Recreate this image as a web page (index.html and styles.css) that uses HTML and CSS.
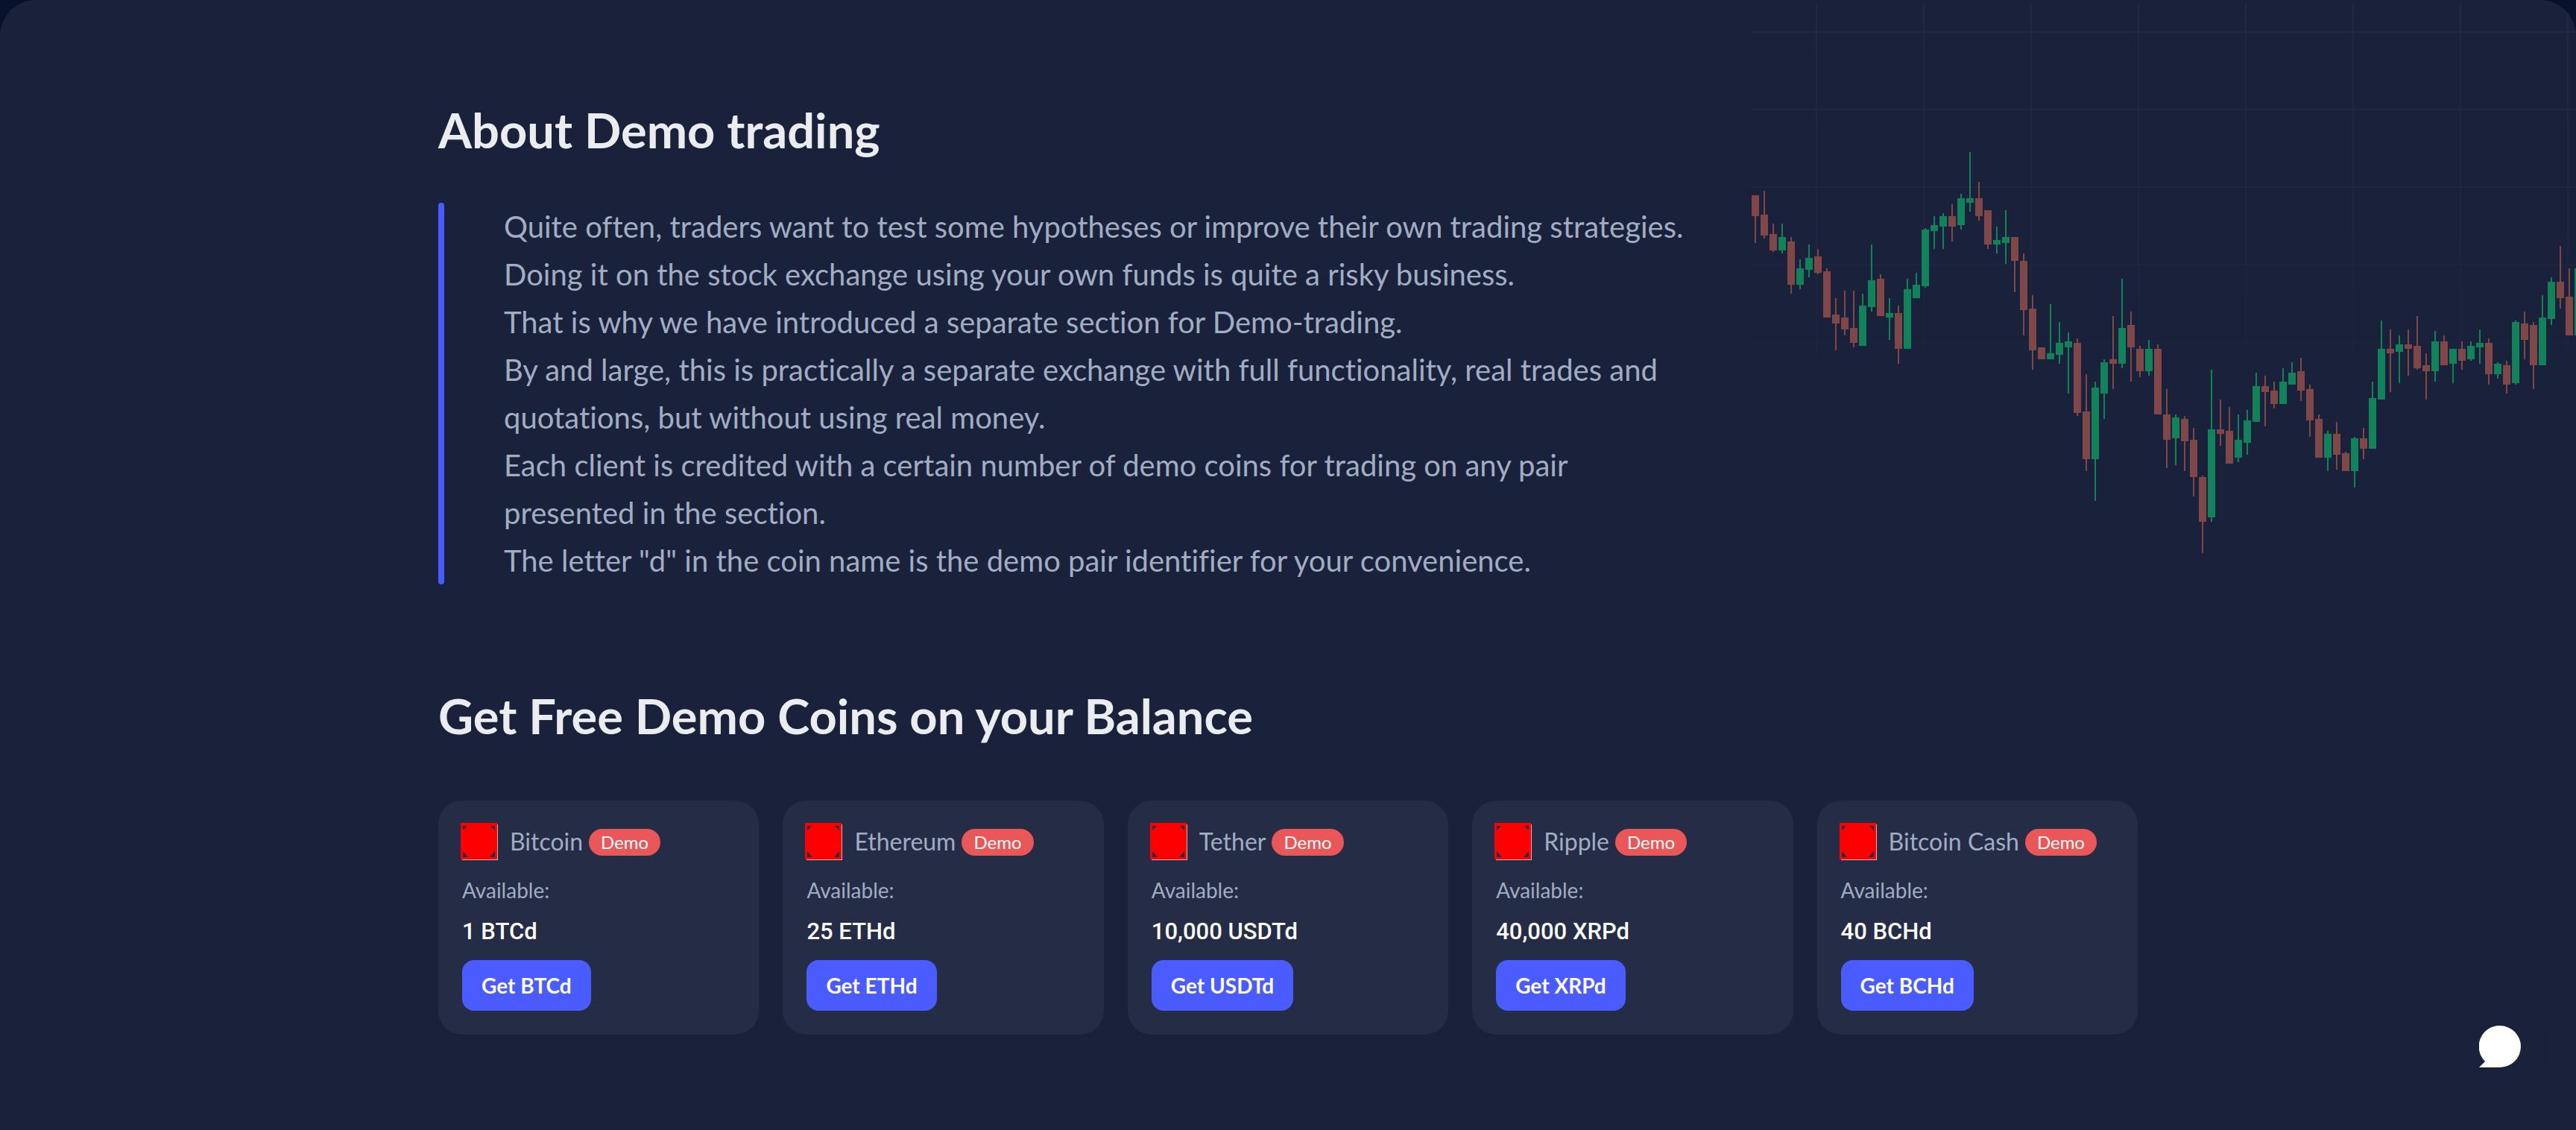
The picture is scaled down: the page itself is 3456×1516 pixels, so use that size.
FILE: index.html
```html
<!DOCTYPE html>
<html lang="en">
<head>
<meta charset="utf-8">
<title>Demo trading</title>
<link rel="stylesheet" href="styles.css">
</head>
<body>
<main class="panel">
  <svg class="chart" width="1108" height="760" viewBox="0 0 554 380" shape-rendering="crispEdges" aria-hidden="true">
    <defs>
      <linearGradient id="fade" gradientUnits="userSpaceOnUse" x1="0" y1="0" x2="0" y2="380">
        <stop offset="0" stop-color="#25273f"/>
        <stop offset="0.3" stop-color="#24263e"/>
        <stop offset="0.65" stop-color="#1b233b"/>
        <stop offset="1" stop-color="#19223a"/>
      </linearGradient>
    </defs>
    <g id="grid" fill="url(#fade)"></g>
    <g id="candles"></g>
  </svg>

  <div class="content">
    <section class="about">
      <h2 class="title">About Demo trading</h2>
      <div class="quote">
        <p>Quite often, traders want to test some hypotheses or improve their own trading strategies.</p>
        <p>Doing it on the stock exchange using your own funds is quite a risky business.</p>
        <p>That is why we have introduced a separate section for Demo-trading.</p>
        <p>By and large, this is practically a separate exchange with full functionality, real trades and quotations, but without using real money.</p>
        <p>Each client is credited with a certain number of demo coins for trading on any pair presented in the section.</p>
        <p>The letter "d" in the coin name is the demo pair identifier for your convenience.</p>
      </div>
    </section>

    <section class="coins">
      <h2 class="title">Get Free Demo Coins on your Balance</h2>
      <ul class="cards">
        <li class="card">
          <div class="coin"><svg class="coin-icon" viewBox="0 0 50 50"><use href="#coin"/></svg><span class="coin-name">Bitcoin</span><span class="badge">Demo</span></div>
          <span class="label">Available:</span>
          <strong class="amount">1 BTCd</strong>
          <button class="get" type="button">Get BTCd</button>
        </li>
        <li class="card">
          <div class="coin"><svg class="coin-icon" viewBox="0 0 50 50"><use href="#coin"/></svg><span class="coin-name">Ethereum</span><span class="badge">Demo</span></div>
          <span class="label">Available:</span>
          <strong class="amount">25 ETHd</strong>
          <button class="get" type="button">Get ETHd</button>
        </li>
        <li class="card">
          <div class="coin"><svg class="coin-icon" viewBox="0 0 50 50"><use href="#coin"/></svg><span class="coin-name">Tether</span><span class="badge">Demo</span></div>
          <span class="label">Available:</span>
          <strong class="amount">10,000 USDTd</strong>
          <button class="get" type="button">Get USDTd</button>
        </li>
        <li class="card">
          <div class="coin"><svg class="coin-icon" viewBox="0 0 50 50"><use href="#coin"/></svg><span class="coin-name">Ripple</span><span class="badge">Demo</span></div>
          <span class="label">Available:</span>
          <strong class="amount">40,000 XRPd</strong>
          <button class="get" type="button">Get XRPd</button>
        </li>
        <li class="card">
          <div class="coin"><svg class="coin-icon" viewBox="0 0 50 50"><use href="#coin"/></svg><span class="coin-name">Bitcoin Cash</span><span class="badge">Demo</span></div>
          <span class="label">Available:</span>
          <strong class="amount">40 BCHd</strong>
          <button class="get" type="button">Get BCHd</button>
        </li>
      </ul>
    </section>
  </div>
</main>

<button class="chat" type="button" aria-label="Open chat">
  <svg width="56" height="56" viewBox="0 0 56 56" aria-hidden="true"><path fill="#fff" d="M28 0a28 28 0 0 1 0 56H0l8-8A28 28 0 0 1 28 0z"/></svg>
</button>

<svg class="sprite" aria-hidden="true">
  <symbol id="coin" viewBox="0 0 50 50">
    <path fill="#c9b3bd" d="M2 49h47V2h1v48H2z"/>
    <path fill="#f00" fill-rule="evenodd" d="M0 0h49v49H0zM3 4v6l6-6zM46 4h-6l6 6zM3 46h7l-7-8zM46 46v-8l-7 8z"/>
  </symbol>
</svg>
<script src="chart.js"></script>
</body>
</html>
```
FILE: styles.css
```css
* { box-sizing: border-box; }
body {
  margin: 0;
  background: #08122d;
  color: #a1adc2;
  font-family: Lato, "Open Sans", sans-serif;
  font-variant-ligatures: none;
}
.panel {
  position: relative;
  min-height: 100vh;
  padding: 132px 40px 128px;
  background: #19223a;
  border-radius: 48px 48px 0 0;
  overflow: hidden;
}
.chart { position: absolute; top: 0; left: calc(50% + 620px); }
.content { position: relative; max-width: 2280px; margin: 0 auto; }
.title {
  margin: 0;
  color: #ebecf0;
  font-size: 65px;
  line-height: 84px;
  font-weight: 700;
}
.quote {
  position: relative;
  max-width: 1680px;
  margin-top: 56px;
  padding-left: 88px;
  font-size: 40px;
  line-height: 64px;
}
.quote::before {
  content: "";
  position: absolute;
  top: 0;
  bottom: 0;
  left: 0;
  width: 8px;
  border-radius: 4px;
  background: #4a5cff;
}
.quote p { margin: 0; }
.coins { margin-top: 134px; }
.cards {
  display: grid;
  grid-template-columns: repeat(5, 1fr);
  gap: 32px;
  margin: 72px 0 0;
  padding: 0;
  list-style: none;
}
.card {
  display: flex;
  flex-direction: column;
  align-items: flex-start;
  padding: 30px 32px 32px;
  border-radius: 32px;
  background: #252c45;
}
.coin { display: flex; align-items: center; }
.coin-icon { flex: none; width: 50px; height: 50px; margin: 0 16px 0 -2px; }
.coin-name { font-size: 32px; line-height: 48px; }
.badge {
  margin: 2px 0 0 8px;
  padding: 0 16px;
  border-radius: 18px;
  background: #e95759;
  color: #fff;
  font-size: 24px;
  line-height: 36px;
}
.label { margin-top: 20px; font-size: 28px; line-height: 40px; }
.amount {
  margin: 16px 0 18px;
  color: #fff;
  font: 500 31px/40px Roboto, sans-serif;
}
.get {
  height: 68px;
  padding: 0 26px;
  border: 0;
  border-radius: 16px;
  background: #4a5cff;
  color: #fff;
  font: 700 28px/68px Lato, sans-serif;
}
.chat {
  position: fixed;
  right: 42px;
  bottom: 52px;
  display: grid;
  place-items: center;
  width: 120px;
  height: 120px;
  padding: 0;
  border: 0;
  border-radius: 40px;
  background: #19223a;
  box-shadow: 0 2px 6px rgba(10, 16, 40, 0.04);
}
.sprite { position: absolute; width: 0; height: 0; }
```
FILE: chart.js
```js
// Each candle: direction, high, body top, body bottom, low (units of 2px).
const candles = `r 131 131 145 163,r 128 144 158 160,r 150 157 168 169,g 150 159 168 170,r 159 162 191 197,
g 174 180 191 194,g 164 173 181 186,r 167 172 183 184,r 180 182 213 213,r 200 211 217 235,r 195 213 221 225,
r 195 220 230 233,g 197 205 232 232,g 164 188 206 209,r 184 187 212 212,g 200 210 213 228,r 205 210 234 244,
g 187 194 234 234,g 183 191 200 200,g 153 154 192 193,g 145 151 155 167,g 143 145 152 167,r 137 145 152 162,
g 130 133 151 154,g 102 133 136 142,r 122 133 145 148,r 141 141 164 167,g 152 161 164 170,g 141 159 163 177,
r 159 159 175 196,r 170 175 208 225,r 198 207 235 248,r 233 233 241 241,g 204 237 241 241,g 216 230 238 244,
g 223 229 233 264,r 227 230 277 279,r 251 276 308 316,g 256 260 308 336,g 241 243 264 281,r 212 241 244 261,
g 187 220 244 247,r 209 218 233 256,r 232 234 249 253,g 228 234 249 252,r 231 234 278 278,r 261 278 295 314,
g 278 280 294 312,r 279 281 296 316,r 287 295 320 333,r 319 320 350 371,g 248 288 347 350,r 268 288 291 299,
r 273 289 311 311,g 278 295 307 310,g 275 282 297 305,g 250 259 283 283,r 252 259 263 286,r 256 262 271 274,
g 247 256 271 271,g 243 250 258 258,r 240 249 262 269,r 258 261 282 293,r 278 281 307 307,g 289 291 307 316,
r 283 291 305 315,r 303 304 316 316,g 293 294 316 327,r 287 294 301 308,g 256 267 301 301,g 215 234 268 268,
r 221 234 237 263,g 225 231 236 257,r 221 231 234 252,r 212 232 247 248,r 237 245 249 268,g 222 229 249 256,
r 225 229 245 245,g 234 234 244 257,r 229 234 242 248,g 229 232 241 242,g 221 230 233 244,r 227 230 251 258,
g 243 244 251 254,r 242 245 258 264,g 215 216 257 258,r 209 217 228 241,r 216 218 245 261,g 198 213 245 245,
g 186 189 214 218,r 165 189 200 207,r 180 199 225 225,g 180 180 225 225`.split(",");

const colors = { r: "#804749", g: "#118259" };

function rect(parent, x, y, width, height, fill) {
  const node = document.createElementNS("http://www.w3.org/2000/svg", "rect");
  Object.entries({ x, y, width, height }).forEach(([k, v]) => node.setAttribute(k, v));
  if (fill) node.setAttribute("fill", fill);
  parent.append(node);
}

const grid = document.getElementById("grid");
for (let y = 21; y < 380; y += 52) rect(grid, 0, y, 554, 1);
for (let x = 44; x < 554; x += 72) rect(grid, x, 2, 1, 376);

const layer = document.getElementById("candles");
candles.forEach((entry, i) => {
  const [dir, ...values] = entry.trim().split(" ");
  const [high, top, bottom, low] = values.map(Number);
  const x = 1 + i * 6;
  rect(layer, x + 2, high, 1, low - high, colors[dir]);
  rect(layer, x, top, 5, bottom - top, colors[dir]);
});
```
